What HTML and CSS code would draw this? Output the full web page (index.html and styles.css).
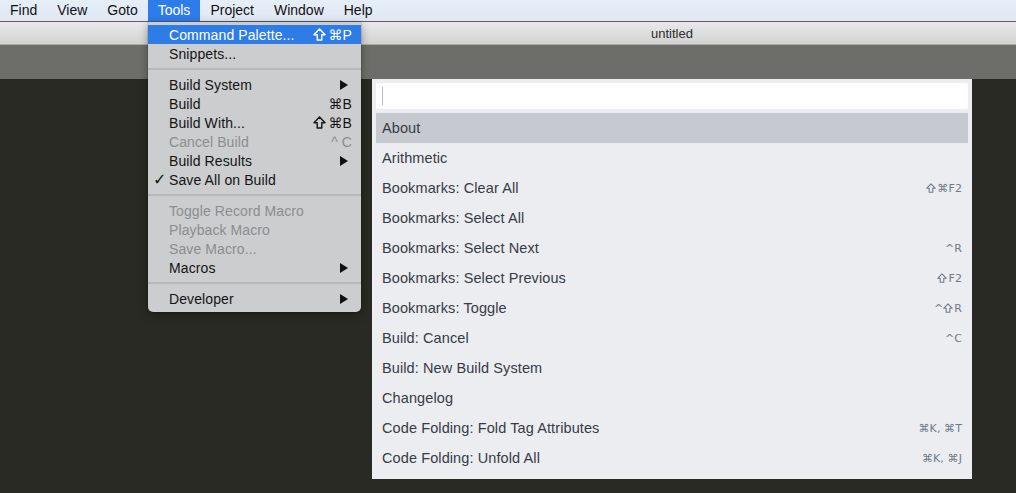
FILE: index.html
```html
<!DOCTYPE html>
<html>
<head>
<meta charset="utf-8">
<link rel="stylesheet" href="styles.css">
</head>
<body>
<div class="screen">
  <div class="menubar">
    <span class="mb-item">Find</span>
    <span class="mb-item">View</span>
    <span class="mb-item">Goto</span>
    <span class="mb-item active">Tools</span>
    <span class="mb-item">Project</span>
    <span class="mb-item">Window</span>
    <span class="mb-item">Help</span>
  </div>
  <div class="titlebar"><span class="title">untitled</span></div>
  <div class="toolbar"></div>
  <div class="editor"></div>

  <div class="dropdown">
    <div class="mi hl"><span class="ck"></span><span class="lbl">Command Palette...</span><span class="sc"><svg class="sh" width="13" height="13" viewBox="0 0 13 13"><path d="M6.5 1 L12 6.8 H8.8 V12 H4.2 V6.8 H1 Z" fill="none" stroke="#fff" stroke-width="1.4" stroke-linejoin="round"/></svg>⌘P</span></div>
    <div class="mi"><span class="ck"></span><span class="lbl">Snippets...</span><span class="sc"></span></div>
    <div class="sep"></div>
    <div class="mi"><span class="ck"></span><span class="lbl">Build System</span><span class="arrow"><svg width="8" height="10" viewBox="0 0 8 10"><path d="M0 0 L8 5 L0 10 Z" fill="#111"/></svg></span></div>
    <div class="mi"><span class="ck"></span><span class="lbl">Build</span><span class="sc">⌘B</span></div>
    <div class="mi"><span class="ck"></span><span class="lbl">Build With...</span><span class="sc"><svg class="sh" width="13" height="13" viewBox="0 0 13 13"><path d="M6.5 1 L12 6.8 H8.8 V12 H4.2 V6.8 H1 Z" fill="none" stroke="#141414" stroke-width="1.4" stroke-linejoin="round"/></svg>⌘B</span></div>
    <div class="mi dis"><span class="ck"></span><span class="lbl">Cancel Build</span><span class="sc">^ C</span></div>
    <div class="mi"><span class="ck"></span><span class="lbl">Build Results</span><span class="arrow"><svg width="8" height="10" viewBox="0 0 8 10"><path d="M0 0 L8 5 L0 10 Z" fill="#111"/></svg></span></div>
    <div class="mi"><span class="ck">✓</span><span class="lbl">Save All on Build</span><span class="sc"></span></div>
    <div class="sep"></div>
    <div class="mi dis"><span class="ck"></span><span class="lbl">Toggle Record Macro</span><span class="sc"></span></div>
    <div class="mi dis"><span class="ck"></span><span class="lbl">Playback Macro</span><span class="sc"></span></div>
    <div class="mi dis"><span class="ck"></span><span class="lbl">Save Macro...</span><span class="sc"></span></div>
    <div class="mi"><span class="ck"></span><span class="lbl">Macros</span><span class="arrow"><svg width="8" height="10" viewBox="0 0 8 10"><path d="M0 0 L8 5 L0 10 Z" fill="#111"/></svg></span></div>
    <div class="sep"></div>
    <div class="mi"><span class="ck"></span><span class="lbl">Developer</span><span class="arrow"><svg width="8" height="10" viewBox="0 0 8 10"><path d="M0 0 L8 5 L0 10 Z" fill="#111"/></svg></span></div>
  </div>

  <div class="palette">
    <div class="input"><span class="cursor"></span></div>
    <div class="rows">
      <div class="row sel"><span>About</span><span class="key"></span></div>
      <div class="row"><span>Arithmetic</span><span class="key"></span></div>
      <div class="row"><span>Bookmarks: Clear All</span><span class="key"><svg class="ksh" width="10" height="10" viewBox="0 0 10 10"><path d="M5 0.8 L9.3 5.3 H6.8 V9.3 H3.2 V5.3 H0.7 Z" fill="none" stroke="#717a8a" stroke-width="1.1" stroke-linejoin="round"/></svg>⌘F2</span></div>
      <div class="row"><span>Bookmarks: Select All</span><span class="key"></span></div>
      <div class="row"><span>Bookmarks: Select Next</span><span class="key">^R</span></div>
      <div class="row"><span>Bookmarks: Select Previous</span><span class="key"><svg class="ksh" width="10" height="10" viewBox="0 0 10 10"><path d="M5 0.8 L9.3 5.3 H6.8 V9.3 H3.2 V5.3 H0.7 Z" fill="none" stroke="#717a8a" stroke-width="1.1" stroke-linejoin="round"/></svg>F2</span></div>
      <div class="row"><span>Bookmarks: Toggle</span><span class="key">^<svg class="ksh" width="10" height="10" viewBox="0 0 10 10"><path d="M5 0.8 L9.3 5.3 H6.8 V9.3 H3.2 V5.3 H0.7 Z" fill="none" stroke="#717a8a" stroke-width="1.1" stroke-linejoin="round"/></svg>R</span></div>
      <div class="row"><span>Build: Cancel</span><span class="key">^C</span></div>
      <div class="row"><span>Build: New Build System</span><span class="key"></span></div>
      <div class="row"><span>Changelog</span><span class="key"></span></div>
      <div class="row"><span>Code Folding: Fold Tag Attributes</span><span class="key">⌘K, ⌘T</span></div>
      <div class="row"><span>Code Folding: Unfold All</span><span class="key">⌘K, ⌘J</span></div>
    </div>
  </div>
</div>
</body>
</html>
```

FILE: styles.css
```css
* { box-sizing: border-box; }
html, body { margin: 0; padding: 0; }
body {
  background: #282923;
  font-family: "Liberation Sans", Arial, sans-serif;
  overflow: hidden;
}
.screen {
  position: relative;
  width: 1016px;
  height: 493px;
  display: flex;
  flex-direction: column;
}
.menubar {
  height: 22px;
  flex: none;
  display: flex;
  align-items: stretch;
  padding-left: 0;
  background: linear-gradient(#e6eef8, #dfe8f3);
  border-bottom: 1px solid #5b6068;
}
.mb-item {
  padding: 0 10px;
  font-size: 14px;
  line-height: 21px;
  color: #111;
}
.mb-item.active {
  background: #2c7ceb;
  color: #fff;
}
.titlebar {
  height: 23px;
  flex: none;
  background: linear-gradient(#e9e9e9, #d3d3d3);
  border-bottom: 1px solid #ababab;
  padding-left: 328px;
  display: flex;
  justify-content: center;
  align-items: center;
}
.title {
  font-size: 13px;
  color: #2e2e2e;
}
.toolbar {
  height: 34px;
  flex: none;
  background: #6d6e69;
}
.editor {
  flex: 1;
  background: #2a2a24;
}

/* dropdown menu */
.dropdown {
  position: absolute;
  left: 148px;
  top: 22px;
  width: 213px;
  height: 290px;
  padding: 3px 0 4px;
  background: #cbcdce;
  border-radius: 0 0 5px 5px;
  box-shadow: 0 3px 10px rgba(0,0,0,0.35), 0 0 0 0.5px rgba(0,0,0,0.2);
}
.mi {
  height: 19px;
  display: grid;
  grid-template-columns: 21px 1fr auto;
  align-items: center;
  padding-right: 9px;
  font-size: 14px;
  color: #141414;
  letter-spacing: 0.1px;
}
.mi.hl {
  background: #2e7de6;
  color: #fff;
}
.mi.dis { color: #8b8d8f; }
.ck {
  padding-left: 5px;
  font-family: "DejaVu Sans", sans-serif;
  font-size: 16px;
  font-weight: bold;
  line-height: 19px;
}
.sc {
  font-family: "Liberation Sans", "DejaVu Sans", sans-serif;
  font-size: 14px;
  display: flex;
  align-items: center;
}
.sh {
  display: block;
  margin-right: 2px;
}
.arrow {
  display: flex;
  padding-right: 4px;
}
.sep {
  height: 12px;
  display: flex;
  align-items: center;
}
.sep::before {
  content: "";
  display: block;
  width: 100%;
  height: 2px;
  background: #b7b8b9;
}

/* command palette */
.palette {
  position: absolute;
  left: 372px;
  top: 79px;
  width: 600px;
  height: 400px;
  background: #ebedf0;
  padding: 4px;
}
.input {
  height: 26px;
  background: #fff;
  border-radius: 2px;
  display: flex;
  align-items: center;
  padding-left: 6px;
}
.cursor {
  width: 1px;
  height: 18px;
  background: #b9b9b9;
}
.rows {
  margin-top: 4px;
  display: flex;
  flex-direction: column;
}
.row {
  height: 30px;
  display: flex;
  align-items: center;
  justify-content: space-between;
  padding: 0 6px;
  font-size: 14.5px;
  color: #373b46;
  letter-spacing: 0.1px;
}
.row.sel { background: #c6c9d0; }
.key {
  font-family: "DejaVu Sans", sans-serif;
  font-size: 11px;
  color: #717a8a;
  display: flex;
  align-items: center;
}
.ksh {
  display: block;
  margin-right: 1px;
}
```
